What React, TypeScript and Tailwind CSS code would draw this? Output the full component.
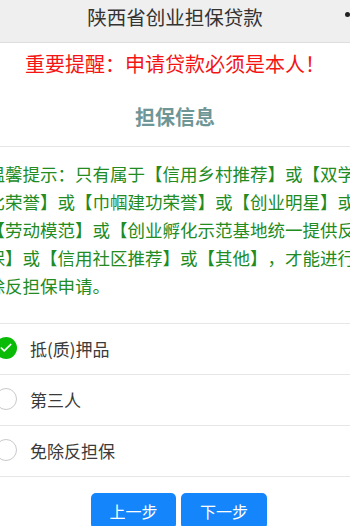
import { Check } from "lucide-react";

const options = [
  { label: "抵(质)押品", checked: true },
  { label: "第三人", checked: false },
  { label: "免除反担保", checked: false },
];

export default function App() {
  return (
    <div className="w-[350px] h-[526px] overflow-hidden bg-white font-['Noto_Sans_CJK_SC','Noto_Sans',sans-serif]">
      {/* 顶部标题栏 */}
      <div className="relative flex h-[43px] justify-center border-b border-[#dedede] bg-[#efefef] pt-[5px]">
        <span className="text-[19.5px] leading-[24px] text-[#333]">陕西省创业担保贷款</span>
        <span className="absolute right-0 top-[12px] h-[5px] w-[5px] rounded-full bg-[#222]" />
      </div>

      <p className="mt-[7px] text-center text-[20px] leading-[28px] text-[#f41414]">
        重要提醒：申请贷款必须是本人！
      </p>

      <p className="mt-[25px] text-center text-[20px] font-bold leading-[28px] text-[#6f9696]">担保信息</p>

      <div className="mt-[15px] border-b border-[#e6e6e6]" />

      {/* 温馨提示 */}
      <p className="-ml-[12.5px] mt-[13px] w-[385px] text-[17.5px] leading-[28px] text-[#228b22] [text-spacing-trim:space-all]">
        温馨提示：只有属于【信用乡村推荐】或【双学双比荣誉】或【巾帼建功荣誉】或【创业明星】或【劳动模范】或【创业孵化示范基地统一提供反担保】或【信用社区推荐】或【其他】，才能进行免除反担保申请。
      </p>

      {/* 选项 */}
      <div className="mt-[23px] border-t border-[#e6e6e6]">
        {options.map((o) => (
          <div key={o.label} className="flex h-[51px] items-center gap-[13px] border-b border-[#e6e6e6]">
            {o.checked ? (
              <span className="-ml-[5px] -mt-[3px] flex h-[22px] w-[22px] shrink-0 items-center justify-center rounded-full bg-[#09bb07]">
                <Check className="h-[14px] w-[14px] text-white" strokeWidth={3} />
              </span>
            ) : (
              <span className="-ml-[5px] -mt-[3px] h-[22px] w-[22px] shrink-0 rounded-full border border-[#c9c9c9]" />
            )}
            <span className="text-[17px] text-[#3a3a3a]">{o.label}</span>
          </div>
        ))}
      </div>

      <div className="mt-[16px] flex justify-center gap-[5px] pl-[8px]">
        <button className="h-[36px] w-[85px] rounded-[5px] bg-[#1485fb] text-[16px] text-white">上一步</button>
        <button className="h-[36px] w-[86px] rounded-[5px] bg-[#1485fb] text-[16px] text-white">下一步</button>
      </div>
    </div>
  );
}
